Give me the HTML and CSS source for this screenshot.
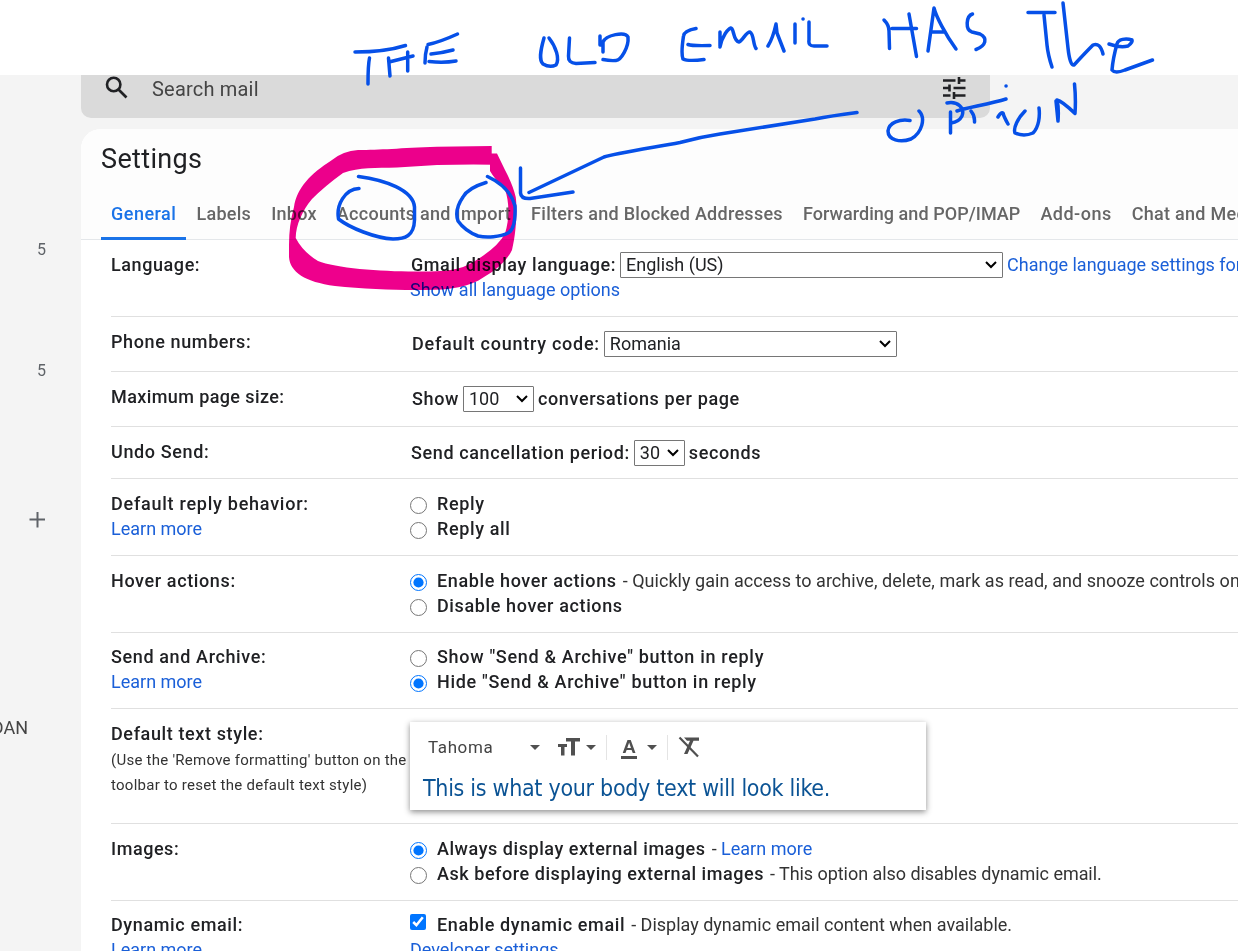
FILE: index.html
```
<!DOCTYPE html>
<html lang="en">

<head>
	<meta charset="utf-8">
	<title>Settings</title>
	<link rel="stylesheet" href="styles.css">
</head>

<body>
	<div class="blank"></div>
	<div class="app">
		<div class="sidebar">
			<div class="count first">5</div>
			<div class="count">5</div>
			<svg class="plus" width="16" height="16" viewBox="0 0 16 16"><path d="M8.500 0v15.500M.5 7.500h16" /></svg>
			<div class="label">DAN</div>
		</div>
		<div class="main">
			<div class="search">
				<svg class="magnifier" width="24" height="24" viewBox="0 0 24 24"><circle cx="8.700" cy="8.500" r="6.700" /><path d="M13.500 13.500l8 8" /></svg>
				<span class="placeholder">Search mail</span>
				<svg class="tune" width="24" height="24" viewBox="0 0 24 24"><path d="M1 4.500h12.500M17 4.500h6.500M17 1v7M1 12h6.500M7.500 8.500v7M11.500 12H23.500M1 19.500h7.500M12 19.500h11.500M12 16v7" /></svg>
			</div>
			<div class="card">
				<div class="head">
					<h1>Settings</h1>
					<div class="tabs">
						<span class="tab active">General</span>
						<span class="tab">Labels</span>
						<span class="tab">Inbox</span>
						<span class="tab">Accounts and Import</span>
						<span class="tab">Filters and Blocked Addresses</span>
						<span class="tab tight">Forwarding and POP/IMAP</span>
						<span class="tab loose">Add-ons</span>
						<span class="tab">Chat and Meet</span>
					</div>
				</div>
				<div class="row language">
					<div><b>Language:</b></div>
					<div>
						<div class="line"><b>Gmail display language:</b><span class="select w-lang">English (US)<svg width="12" height="8" viewBox="0 0 12 8"><path d="M1 1l5 5 5-5" /></svg></span><a>Change language settings for other Google products</a></div>
						<a>Show all language options</a>
					</div>
				</div>
				<div class="row phone">
					<div><b>Phone numbers:</b></div>
					<div class="line"><b>Default country code:</b><span class="select w-country">Romania<svg width="12" height="8" viewBox="0 0 12 8"><path d="M1 1l5 5 5-5" /></svg></span></div>
				</div>
				<div class="row pagesize">
					<div><b>Maximum page size:</b></div>
					<div class="line"><b>Show</b><span class="select w-size">100<svg width="12" height="8" viewBox="0 0 12 8"><path d="M1 1l5 5 5-5" /></svg></span><b>conversations per page</b></div>
				</div>
				<div class="row undo">
					<div><b>Undo Send:</b></div>
					<div class="line"><b>Send cancellation period:</b><span class="select w-undo">30<svg width="12" height="8" viewBox="0 0 12 8"><path d="M1 1l5 5 5-5" /></svg></span><b>seconds</b></div>
				</div>
				<div class="row reply">
					<div><b>Default reply behavior:</b><br><a>Learn more</a></div>
					<div>
						<label><input type="radio" name="reply"><b>Reply</b></label>
						<label><input type="radio" name="reply"><b>Reply all</b></label>
					</div>
				</div>
				<div class="row hover">
					<div><b>Hover actions:</b></div>
					<div>
						<label><input type="radio" name="hover" checked><b>Enable hover actions</b><span>- Quickly gain access to archive, delete, mark as read, and snooze controls on hover.</span></label>
						<label><input type="radio" name="hover"><b>Disable hover actions</b></label>
					</div>
				</div>
				<div class="row archive">
					<div><b>Send and Archive:</b><br><a>Learn more</a></div>
					<div>
						<label><input type="radio" name="archive"><b>Show "Send &amp; Archive" button in reply</b></label>
						<label><input type="radio" name="archive" checked><b>Hide "Send &amp; Archive" button in reply</b></label>
					</div>
				</div>
				<div class="row textstyle">
					<div><b>Default text style:</b><small>(Use the 'Remove formatting' button on the<br>toolbar to reset the default text style)</small></div>
					<div class="editor">
						<div class="toolbar">
							<span class="font">Tahoma</span>
							<svg class="caret" width="10" height="5" viewBox="0 0 10 5"><path d="M0 0h10L5 5z" /></svg>
							<svg class="size" width="22" height="18" viewBox="0 0 22 18"><path d="M8 0h14v3.500h-5V17.500h-4V3.500H8zM0 6h9v3H6.500v8.500H3V9H0z" /></svg>
							<svg class="caret" width="10" height="5" viewBox="0 0 10 5"><path d="M0 0h10L5 5z" /></svg>
							<i class="sep"></i>
							<span class="color">A</span>
							<svg class="caret" width="10" height="5" viewBox="0 0 10 5"><path d="M0 0h10L5 5z" /></svg>
							<i class="sep"></i>
							<svg class="clear" width="22" height="22" viewBox="0 0 22 22"><path class="fill" d="M6 1.500h15v3.300H15.500L9.500 18H6L12 4.800H9z" /><path class="slash" d="M1.500 1.500l18.500 19" /></svg>
						</div>
						<div class="sample">This is what your body text will look like.</div>
					</div>
				</div>
				<div class="row images">
					<div><b>Images:</b></div>
					<div>
						<label><input type="radio" name="images" checked><b>Always display external images</b><span>- <a>Learn more</a></span></label>
						<label><input type="radio" name="images"><b>Ask before displaying external images</b><span>- This option also disables dynamic email.</span></label>
					</div>
				</div>
				<div class="row dynamic">
					<div><b>Dynamic email:</b><br><a>Learn more</a></div>
					<div>
						<label><input type="checkbox" checked><b>Enable dynamic email</b><span>- Display dynamic email content when available.</span></label>
						<a>Developer settings</a>
					</div>
				</div>
			</div>
		</div>
	</div>

	<!-- hand-drawn notes -->
	<svg class="marker" width="1238" height="951" viewBox="0 0 1238 951">
		<path fill-rule="evenodd" d="M491.700 146L437 146.700C400 148 380 150 358 150Q343 151 332 160C310 174 297 188 294 207Q289 225 289 245L289 257C290 272 305 282 335 286C365 289 400 290.500 425 290C450 290 470 287 484 277Q505 265 512 250C517 230 517 205 515.700 197Q513 185 505 170L497 153.500H491.700ZM491.700 164.300L437 165 397 167.500C375 168 360 167 343 173Q325 186 312 199C302 211 296 225 295.700 238Q303 252 318 261C335 268 380 271.500 415 271.500C440 271.500 458 272 475 261Q498 247 505 233.500C510 218 509 200 505 190Q494 178 490 171V164.300Z" />
	</svg>
	<svg class="pen" width="1238" height="951" viewBox="0 0 1238 951">
		<!-- the -->
		<path d="M355 52Q385 52 405.500 45.500M369.500 58Q368 65 368 84M388.500 58L390 76M389 62L413 56M407.700 52V71M427 47Q425 54 425 63M428 44.500Q440 42 457.500 34M431 54Q442 53 453 50M429 61.500Q444 63 456 61" />
		<!-- old -->
		<path d="M544 38C540 52 539 60 543 64C548 67 552 67 556 65C560 59 556 47 549 38M569.500 38L568.500 56Q568 63 576 63.500L595 62.500M600 36V45M603 52V42C606 35 625 31 628 37C629 47 621 60 616 60.500Q610 61 603 59.500" />
		<!-- email -->
		<path d="M696 28.500C688 30 684 32 683.500 36C682 46 681 54 683 59Q688 61.500 704 59.500M688 44.500Q692 46 710 45.500M720 32L720 46M720 47C722 36 728 29 731 28C734 28 733 41 739 42C743 40 746 32 750 32C754 34 753 45 756 48.500M768 46Q773 38 776 24L777 33 784 51M795 24V43M803 19h.1M809 22V40Q808 46 814 46L827 46" />
		<!-- has -->
		<path d="M884 20Q889 25 889 31L889.500 48.500M892 28.500H916.500M909 14L916.500 56.500M928 51L934 8C936 16 945 34 956 49M933 32H943M972.500 14C966 16 965 30 972 32L980 34C988 38 986 46 976 49.500" />
		<!-- the -->
		<path d="M1028 12.500H1055M1044 15L1047 45Q1048 55 1052 67M1063 3L1068 48Q1070 66 1074 65Q1085 53 1093 45Q1100 42 1103 54M1109 44Q1120 48 1128 46Q1133 42 1132 40C1126 38 1118 39 1117 44Q1113 58 1112 70Q1115 74 1125 70L1152.500 60" />
		<!-- option -->
		<path d="M910 120.500C900 119 889 122 888 131C888 140 900 143 911 139C922 133 926 118 919 111M950.500 112V133M947 103C958 101 965 108 962 116Q959 122 951 123M957 111C965 108 990 104 1006 99M971 111Q975 116 974.500 122M998 117Q1001 112 1003 113Q1004 117 1008 124M1006 86h.1M1025 111C1018 118 1013 128 1015 133Q1024 137 1033 133C1039 127 1040 116 1039 108M1056 101L1058 121Q1059 108 1057 100Q1062 101 1075 113.500Q1076 99 1074.500 84" />
		<!-- arrow -->
		<path d="M857 112.500Q830 116 815 119L720 134Q700 137 680 142.500C650 148 612 154 604 157L529 192.500M520.500 168L520.500 193Q521 199 530 198.500L573 192" />
		<!-- circles -->
		<path d="M358.500 176.500C385 180 413 190 414.500 207L414.500 220C414 236 405 239 393 239C375 238 350 228 338.500 219C336 205 345 189 359 188.500M487.500 176.500Q510 187 515 206Q516 229 508 233C500 237 487 238 478 236Q465 231 458 221Q454 210 463 197Q468 188 486 182.500" />
	</svg>
</body>

</html>
```
FILE: styles.css
```
body {
	margin: 0;
	height: 951px;
	overflow: hidden;
	position: relative;
	background: #fff;
	color: #202124;
	font: 18px/25px Roboto, "Liberation Sans", sans-serif;
}

.blank {
	height: 75px;
}

.app {
	display: flex;
	height: 876px;
	overflow: hidden;
	background: #f4f4f4;
}

/* left rail */
.sidebar {
	flex: none;
	width: 81px;
	color: #5f6368;
	font-size: 16px;
}
.count {
	margin: 96px 35px 0 0;
	text-align: right;
}
.count.first {
	margin-top: 162px;
}
.plus {
	display: block;
	margin: 129px 0 0 29px;
	fill: none;
	stroke: #5f6368;
	stroke-width: 2;
}
.label {
	margin-top: 187px;
	width: 28px;
	display: flex;
	justify-content: flex-end;
	color: #444;
	font-size: 18px;
}

.main {
	flex: none;
	width: 1157px;
	overflow: hidden;
}
.search {
	box-sizing: border-box;
	width: 909px;
	height: 43px;
	padding: 1px 24px 0;
	display: flex;
	align-items: flex-start;
	background: #dadada;
	border-radius: 0 0 10px 10px;
}
.search svg {
	fill: none;
	stroke: #202124;
	stroke-width: 2.6;
}
.placeholder {
	flex: 1;
	margin: 1px 0 0 23px;
	font-size: 20px;
	letter-spacing: .2px;
	color: #444;
}

.card {
	margin-top: 11px;
	height: 822px;
	overflow: hidden;
	background: #fff;
	border-radius: 20px 0 0 0;
	white-space: nowrap;
}
.head {
	height: 110px;
	background: #fdfdfd;
	border-bottom: 1px solid #e4e7ea;
}
h1 {
	margin: 0;
	padding: 14px 20px 0;
	font: 27px/32px Roboto, sans-serif;
	letter-spacing: .35px;
}
.tabs {
	display: flex;
	margin: 26px 0 0 20px;
}
.tab {
	flex: none;
	height: 36px;
	padding: 0 10px;
	color: #666;
	font-weight: 500;
	letter-spacing: .28px;
}
.active {
	color: #1a73e8;
	letter-spacing: .5px;
	border-bottom: 3px solid #1a73e8;
}
.tight {
	letter-spacing: .05px;
}
.loose {
	letter-spacing: .5px;
}

.row {
	box-sizing: border-box;
	display: grid;
	grid-template-columns: 299px 1fr;
	height: 77px;
	margin-left: 30px;
	padding-top: 12px;
	border-bottom: 1px solid #e0e0e0;
}
.phone,
.pagesize {
	height: 55px;
}
.undo {
	height: 52px;
}
.archive {
	height: 76px;
	padding-top: 11px;
}
.textstyle {
	height: 115px;
}
.dynamic {
	padding-top: 11px;
	border: 0;
}
.phone .line,
.pagesize .line {
	margin: 2px 0 0 2px;
}
.language .line,
.undo .line {
	margin-left: 1px;
}
.undo .line {
	margin-top: 1px;
}
b {
	font-weight: 500;
	letter-spacing: .62px;
}
.language b {
	letter-spacing: .58px;
}
.phone .line b,
.reply > div:first-child b {
	letter-spacing: .75px;
}
.pagesize > div:first-child b {
	letter-spacing: .4px;
}
.archive label b {
	letter-spacing: .69px;
}
.images b {
	letter-spacing: .55px;
}
.images span {
	letter-spacing: -.05px;
}
.hover span,
.images a {
	letter-spacing: .04px;
}
a {
	color: #1a5fd8;
}
small {
	display: block;
	margin-top: 2px;
	font-size: 15px;
	letter-spacing: .26px;
	color: #333;
}
.line {
	display: flex;
	height: 25px;
	align-items: center;
	gap: 4px;
}
.select {
	box-sizing: border-box;
	height: 26px;
	padding: 0 5px;
	display: flex;
	align-items: center;
	justify-content: space-between;
	border: 1px solid #767676;
	border-radius: 1px;
}
.select svg {
	fill: none;
	stroke: #000;
	stroke-width: 2;
}
.w-lang {
	width: 383px;
}
.w-country {
	width: 293px;
}
.w-size {
	width: 71px;
}
.w-undo {
	width: 51px;
}

label {
	display: flex;
	align-items: center;
	height: 25px;
}
label span {
	margin-left: 6px;
	color: #333;
}
input {
	width: 17px;
	height: 17px;
	margin: 3px 10px 0 0;
	accent-color: #0075ff;
}
input[type=checkbox] {
	width: 16px;
	height: 16px;
	margin: -5px 11px 0 0;
}

/* text style preview */
.editor {
	box-sizing: border-box;
	width: 516px;
	height: 88px;
	margin-top: 1px;
	background: #fff;
	box-shadow: 0 2px 6px rgba(0, 0, 0, .45);
}
.toolbar {
	display: flex;
	align-items: center;
	height: 50px;
	padding-left: 18px;
	color: #444;
}
.toolbar svg {
	fill: #505050;
}
.font {
	width: 102px;
	font-size: 17px;
	letter-spacing: .6px;
}
.size {
	margin: 0 6px 0 18px;
}
.sep {
	width: 1px;
	height: 25px;
	margin: 0 14px 0 10px;
	background: #e4e4e4;
}
.toolbar .clear {
	margin-left: -4px;
}
.color {
	width: 16px;
	height: 18px;
	margin: 2px 10px 0 0;
	color: #505050;
	font: bold 19px/18px "Liberation Sans", sans-serif;
	text-align: center;
	border-bottom: 3px solid #505050;
}
.slash {
	stroke: #505050;
	stroke-width: 2.2;
}
.sample {
	padding-left: 13px;
	margin-top: 3px;
	color: #0b5394;
	font: 23px/26px "DejaVu Sans Condensed", "DejaVu Sans", sans-serif;
	letter-spacing: -.3px;
}

.marker,
.pen {
	position: absolute;
	left: 0;
	top: 0;
	pointer-events: none;
}
.marker {
	fill: #ee008c;
	mix-blend-mode: multiply;
}
.pen {
	fill: none;
	stroke: #0650e8;
	stroke-width: 3.5;
	stroke-linecap: round;
	stroke-linejoin: round;
}
```
